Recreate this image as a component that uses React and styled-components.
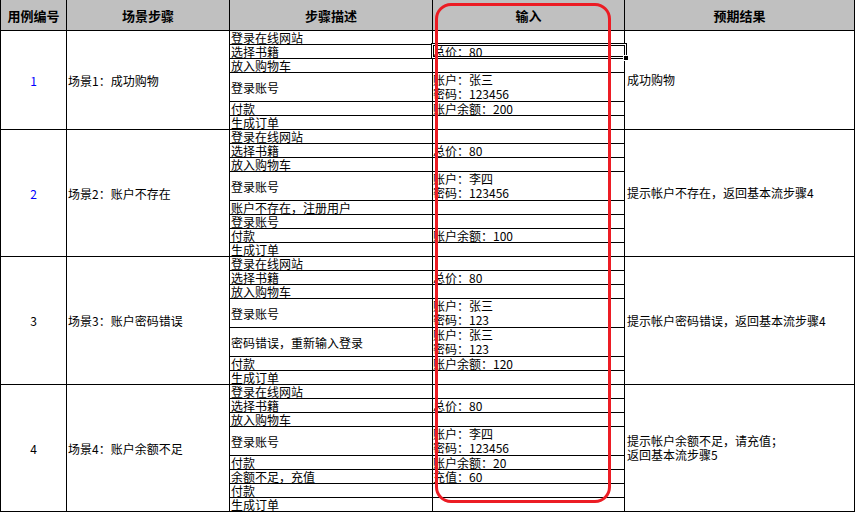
import React from 'react';
import styled, { createGlobalStyle } from 'styled-components';

const GlobalStyle = createGlobalStyle`
  html, body {
    margin: 0;
    padding: 0;
    background: #fff;
  }
  body {
    font-family: "Noto Sans CJK SC", "DejaVu Sans", sans-serif;
    font-size: 12px;
    color: #000;
  }
`;

const Sheet = styled.div`
  position: relative;
  width: 856px;
  height: 513px;
  overflow: hidden;
`;

const Grid = styled.div`
  display: grid;
  grid-template-columns: 65px 162px 202px 191px 229px;
  grid-template-rows: ${({ $rows }) => $rows};
  gap: 1px;
  padding: 0 1px 1px 1px;
  width: max-content;
  background: #000;
`;

const Head = styled.div`
  display: flex;
  align-items: center;
  justify-content: center;
  background: #c0c0c0;
  font-weight: bold;
  font-size: 13px;
`;

const Cell = styled.div`
  display: flex;
  flex-direction: column;
  justify-content: ${({ $valign }) => $valign || 'center'};
  align-items: ${({ $align }) => $align || 'flex-start'};
  grid-row: span ${({ $span }) => $span || 1};
  min-height: 0;
  background: #fff;
  padding: 0 ${({ $pad }) => $pad ?? 1}px;
  line-height: ${({ $lh }) => $lh || 13}px;
  white-space: nowrap;
  color: ${({ $blue }) => ($blue ? '#0000ff' : '#000')};
`;

const Selection = styled.div`
  position: absolute;
  left: 431px;
  top: 43px;
  width: 196px;
  height: 16px;
  box-sizing: border-box;
  border: 1px solid #000;
  box-shadow: inset 0 0 0 1px #fff, inset 0 0 0 2px #000;
  pointer-events: none;

  &::after {
    content: '';
    position: absolute;
    right: -3px;
    bottom: -3px;
    width: 4px;
    height: 4px;
    background: #000;
    border: 1px solid #fff;
  }
`;

const Ring = styled.div`
  position: absolute;
  left: 435px;
  top: 3px;
  width: 176px;
  height: 500px;
  box-sizing: border-box;
  border: 3px solid #ec1c24;
  border-radius: 16px;
  pointer-events: none;
`;

const groups = [
  {
    id: '1',
    blue: true,
    scene: '场景1：成功购物',
    result: ['成功购物'],
    steps: [
      ['登录在线网站'],
      ['选择书籍', '总价：80'],
      ['放入购物车'],
      ['登录账号', ['账户：张三', '密码：123456']],
      ['付款', '账户余额：200'],
      ['生成订单'],
    ],
  },
  {
    id: '2',
    blue: true,
    scene: '场景2：账户不存在',
    result: ['提示帐户不存在，返回基本流步骤4'],
    steps: [
      ['登录在线网站'],
      ['选择书籍', '总价：80'],
      ['放入购物车'],
      ['登录账号', ['账户：李四', '密码：123456']],
      ['账户不存在，注册用户'],
      ['登录账号'],
      ['付款', '账户余额：100'],
      ['生成订单'],
    ],
  },
  {
    id: '3',
    scene: '场景3：账户密码错误',
    result: ['提示帐户密码错误，返回基本流步骤4'],
    steps: [
      ['登录在线网站'],
      ['选择书籍', '总价：80'],
      ['放入购物车'],
      ['登录账号', ['账户：张三', '密码：123']],
      ['密码错误，重新输入登录', ['账户：张三', '密码：123']],
      ['付款', '账户余额：120'],
      ['生成订单'],
    ],
  },
  {
    id: '4',
    scene: '场景4：账户余额不足',
    result: ['提示帐户余额不足，请充值；', '返回基本流步骤5'],
    steps: [
      ['登录在线网站'],
      ['选择书籍', '总价：80'],
      ['放入购物车'],
      ['登录账号', ['账户：李四', '密码：123456']],
      ['付款', '账户余额：20'],
      ['余额不足，充值', '充值：60'],
      ['付款'],
      ['生成订单'],
    ],
  },
];

const isTall = (step) => Array.isArray(step[1]);

const rowHeights = [
  '30px',
  ...groups.flatMap((g) => g.steps.map((s) => (isTall(s) ? '28px' : '13px'))),
].join(' ');

const Lines = ({ text }) =>
  (Array.isArray(text) ? text : [text]).map((t) => <span key={t}>{t}</span>);

const Group = ({ group }) => {
  const span = group.steps.length;
  return group.steps.map((step, i) => {
    const tall = isTall(step);
    const input = step[1];
    return (
      <React.Fragment key={i}>
        {i === 0 && (
          <Cell $span={span} $align="center" $blue={group.blue}>
            {group.id}
          </Cell>
        )}
        {i === 0 && <Cell $span={span}>{group.scene}</Cell>}
        <Cell $valign={tall ? 'center' : 'flex-end'}>{step[0]}</Cell>
        <Cell $valign={tall ? 'flex-start' : 'flex-end'} $lh={tall ? 14 : 13} $pad={0}>
          {input && <Lines text={input} />}
        </Cell>
        {i === 0 && (
          <Cell $span={span} $pad={2} $lh={14}>
            <Lines text={group.result} />
          </Cell>
        )}
      </React.Fragment>
    );
  });
};

export default function App() {
  return (
    <>
      <GlobalStyle />
      <Sheet>
        <Grid $rows={rowHeights}>
          <Head>用例编号</Head>
          <Head>场景步骤</Head>
          <Head>步骤描述</Head>
          <Head>输入</Head>
          <Head>预期结果</Head>
          {groups.map((g) => (
            <Group key={g.id} group={g} />
          ))}
        </Grid>
        <Selection />
        <Ring />
      </Sheet>
    </>
  );
}
